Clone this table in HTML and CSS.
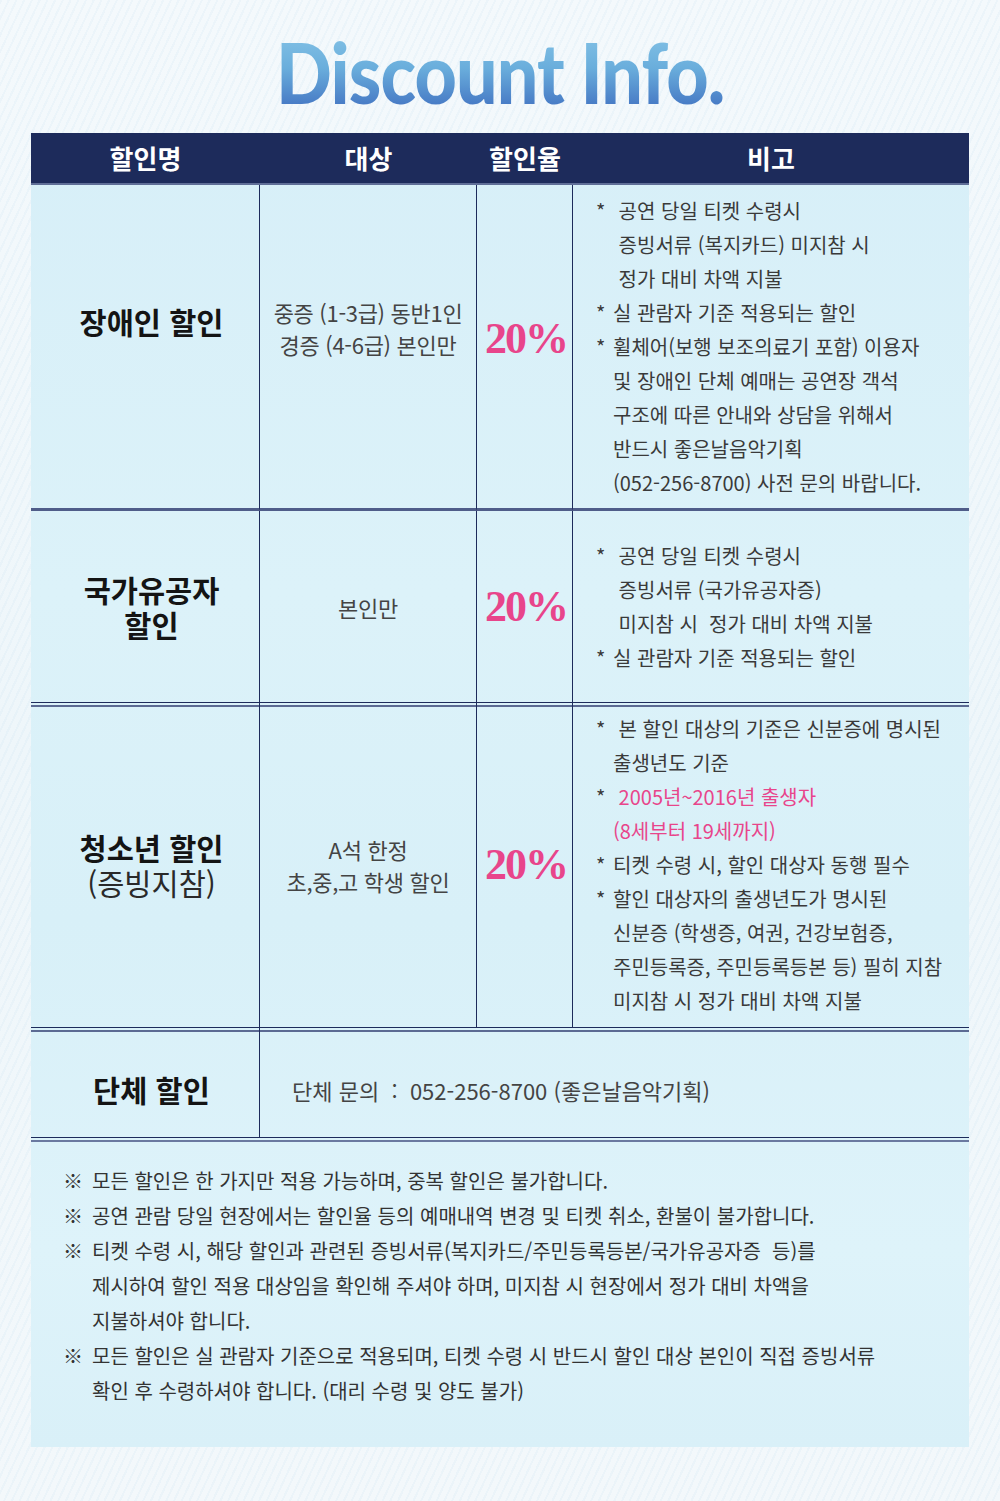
FILE: index.html
```
<!DOCTYPE html>
<html lang="ko">
<head>
<meta charset="utf-8">
<title>Discount Info.</title>
<link rel="stylesheet" href="styles.css">
</head>
<body>
<div class="page">
  <h1 class="title"><span class="title-text">Discount Info.</span></h1>
  <div class="panel">
    <div class="table">
      <div class="th">할인명</div>
      <div class="th">대상</div>
      <div class="th">할인율</div>
      <div class="th">비고</div>

      <div class="td c1 r1"><div class="name up1">장애인 할인</div></div>
      <div class="td c2 r1"><div class="target up2">중증 (1-3급) 동반1인<br>경증 (4-6급) 본인만</div></div>
      <div class="td c3 r1"><div class="rate up3">20%</div></div>
      <div class="td c4 r1">
        <ul class="notes">
          <li><span class="star">*</span><span class="txt">&nbsp;공연 당일 티켓 수령시<br>&nbsp;증빙서류 (복지카드) 미지참 시<br>&nbsp;정가 대비 차액 지불</span></li>
          <li><span class="star">*</span><span class="txt">실 관람자 기준 적용되는 할인</span></li>
          <li><span class="star">*</span><span class="txt">휠체어(보행 보조의료기 포함) 이용자<br>및 장애인 단체 예매는 공연장 객석<br>구조에 따른 안내와 상담을 위해서<br>반드시 좋은날음악기획<br>(052-256-8700) 사전 문의 바랍니다.</span></li>
        </ul>
      </div>

      <div class="td c1 r2"><div class="name"><div class="name-line">국가유공자</div><div class="name-line">할인</div></div></div>
      <div class="td c2 r2"><div class="target">본인만</div></div>
      <div class="td c3 r2"><div class="rate">20%</div></div>
      <div class="td c4 r2">
        <ul class="notes">
          <li><span class="star">*</span><span class="txt">&nbsp;공연 당일 티켓 수령시<br>&nbsp;증빙서류 (국가유공자증)<br>&nbsp;미지참 시&nbsp; 정가 대비 차액 지불</span></li>
          <li><span class="star">*</span><span class="txt">실 관람자 기준 적용되는 할인</span></li>
        </ul>
      </div>

      <div class="td c1 r3"><div class="name"><div class="name-line">청소년 할인</div><div class="name-line name-sub">(증빙지참)</div></div></div>
      <div class="td c2 r3"><div class="target">A석 한정<br>초,중,고 학생 할인</div></div>
      <div class="td c3 r3"><div class="rate">20%</div></div>
      <div class="td c4 r3">
        <ul class="notes">
          <li><span class="star">*</span><span class="txt">&nbsp;본 할인 대상의 기준은 신분증에 명시된<br>출생년도 기준</span></li>
          <li class="pink"><span class="star">*</span><span class="txt">&nbsp;2005년~2016년 출생자<br>(8세부터 19세까지)</span></li>
          <li><span class="star">*</span><span class="txt">티켓 수령 시, 할인 대상자 동행 필수</span></li>
          <li><span class="star">*</span><span class="txt">할인 대상자의 출생년도가 명시된<br>신분증 (학생증, 여권, 건강보험증,<br>주민등록증, 주민등록등본 등) 필히 지참<br>미지참 시 정가 대비 차액 지불</span></li>
        </ul>
      </div>

      <div class="td c1 r4"><div class="name down">단체 할인</div></div>
      <div class="td span r4"><div class="target inquiry down">단체 문의&nbsp; :&nbsp; 052-256-8700 (좋은날음악기획)</div></div>
    </div>

    <div class="footnotes">
      <p class="fn"><span class="mark">※</span><span class="fn-txt">모든 할인은 한 가지만 적용 가능하며, 중복 할인은 불가합니다.</span></p>
      <p class="fn"><span class="mark">※</span><span class="fn-txt">공연 관람 당일 현장에서는 할인율 등의 예매내역 변경 및 티켓 취소, 환불이 불가합니다.</span></p>
      <p class="fn"><span class="mark">※</span><span class="fn-txt">티켓 수령 시, 해당 할인과 관련된 증빙서류(복지카드/주민등록등본/국가유공자증&nbsp; 등)를<br>제시하여 할인 적용 대상임을 확인해 주셔야 하며, 미지참 시 현장에서 정가 대비 차액을<br>지불하셔야 합니다.</span></p>
      <p class="fn"><span class="mark">※</span><span class="fn-txt">모든 할인은 실 관람자 기준으로 적용되며, 티켓 수령 시 반드시 할인 대상 본인이 직접 증빙서류<br>확인 후 수령하셔야 합니다. (대리 수령 및 양도 불가)</span></p>
    </div>
  </div>
</div>
</body>
</html>
```
FILE: styles.css
```
* { box-sizing: border-box; }

html, body {
  margin: 0;
  padding: 0;
}

body {
  width: 1000px;
  height: 1501px;
  background:
    repeating-linear-gradient(115deg, rgba(200, 225, 240, 0.18) 0 2px, rgba(255, 255, 255, 0) 2px 7px),
    linear-gradient(180deg, #f4f9fc 0%, #eef6fa 50%, #f3f8fb 100%);
  font-family: "Noto Sans CJK KR", "Noto Sans", sans-serif;
  color: #3a3a3a;
  overflow: hidden;
}

.page {
  width: 1000px;
  padding-top: 30px;
}

.title {
  margin: 0;
  height: 103px;
  text-align: center;
  font-family: Lato, "Liberation Sans", sans-serif;
  font-weight: 900;
  font-size: 84px;
  line-height: 84px;
}

.title-text {
  display: inline-block;
  transform: scaleX(0.875);
  letter-spacing: -1px;
  background: linear-gradient(180deg, #85c3e6 0%, #6aaedc 45%, #3f6fc0 100%);
  -webkit-background-clip: text;
  background-clip: text;
  color: transparent;
}

.panel {
  margin: 0 31px;
  width: 938px;
  background: linear-gradient(180deg, #d7eff8 0%, #dcf2f9 35%, #d8f0f8 60%, #def3fa 85%, #d9f0f8 100%);
}

.table {
  display: grid;
  grid-template-columns: 229px 217px 96px 396px;
  grid-template-rows: 52px 326px 192px 325px 110px;
}

.th {
  background: #1d2b5b;
  color: #ffffff;
  font-weight: 700;
  font-size: 26px;
  letter-spacing: 0;
  display: flex;
  align-items: center;
  justify-content: center;
  border-bottom: 2px solid #5f6e97;
  padding-bottom: 2px;
}

.td {
  display: flex;
  align-items: center;
  justify-content: center;
  border-right: 1px solid #1d2b5b;
}

.c4 {
  border-right: none;
  justify-content: flex-start;
  padding-left: 23px;
}

.r1 {
  border-bottom: 3px solid #4f5d89;
}

.r2, .r3 {
  border-bottom: 1px solid #1d2b5b;
}

.r3, .r4 {
  background: linear-gradient(#5b6a93, #5b6a93) 0 2px / 100% 2px no-repeat;
}

.r4 {
  border-bottom: 1px solid #1d2b5b;
}

.span {
  grid-column: 2 / 5;
  border-right: none;
  justify-content: flex-start;
  padding-left: 32px;
}

.name {
  font-weight: 700;
  font-size: 29.5px;
  line-height: 35px;
  letter-spacing: 0;
  color: #141414;
  text-align: center;
  padding-left: 13px;
}

.name-line {
  height: 35px;
}

.name-sub {
  font-weight: 400;
  color: #2a2a2a;
}

.target {
  font-size: 22px;
  line-height: 32px;
  letter-spacing: -0.3px;
  color: #444444;
  text-align: center;
}

.inquiry {
  text-align: left;
  letter-spacing: 0;
}

.rate {
  font-family: "Liberation Serif", serif;
  font-weight: 700;
  font-size: 44px;
  letter-spacing: -2px;
  color: #e8458b;
  line-height: 50px;
  padding-left: 3px;
}

.up1 { margin-bottom: 50px; }
.up2 { margin-bottom: 38px; }
.up3 { margin-bottom: 16px; }
.down { margin-top: 14px; }

.notes {
  list-style: none;
  margin: 0;
  padding: 0;
  font-size: 20px;
  line-height: 34px;
  letter-spacing: 0;
  color: #3a3a3a;
  white-space: nowrap;
}

.notes li {
  display: flex;
}

.star {
  width: 17px;
  flex: none;
  color: #3a3a3a;
}

.pink {
  color: #e8458b;
}

.footnotes {
  border-top: 2px solid #6a79a0;
  margin-top: 2px;
  height: 307px;
  padding: 21px 0 0 32px;
}

.fn {
  margin: 0;
  display: flex;
  font-size: 20px;
  line-height: 35px;
  letter-spacing: 0;
  color: #333333;
  white-space: nowrap;
}

.mark {
  width: 29px;
  flex: none;
}
```
